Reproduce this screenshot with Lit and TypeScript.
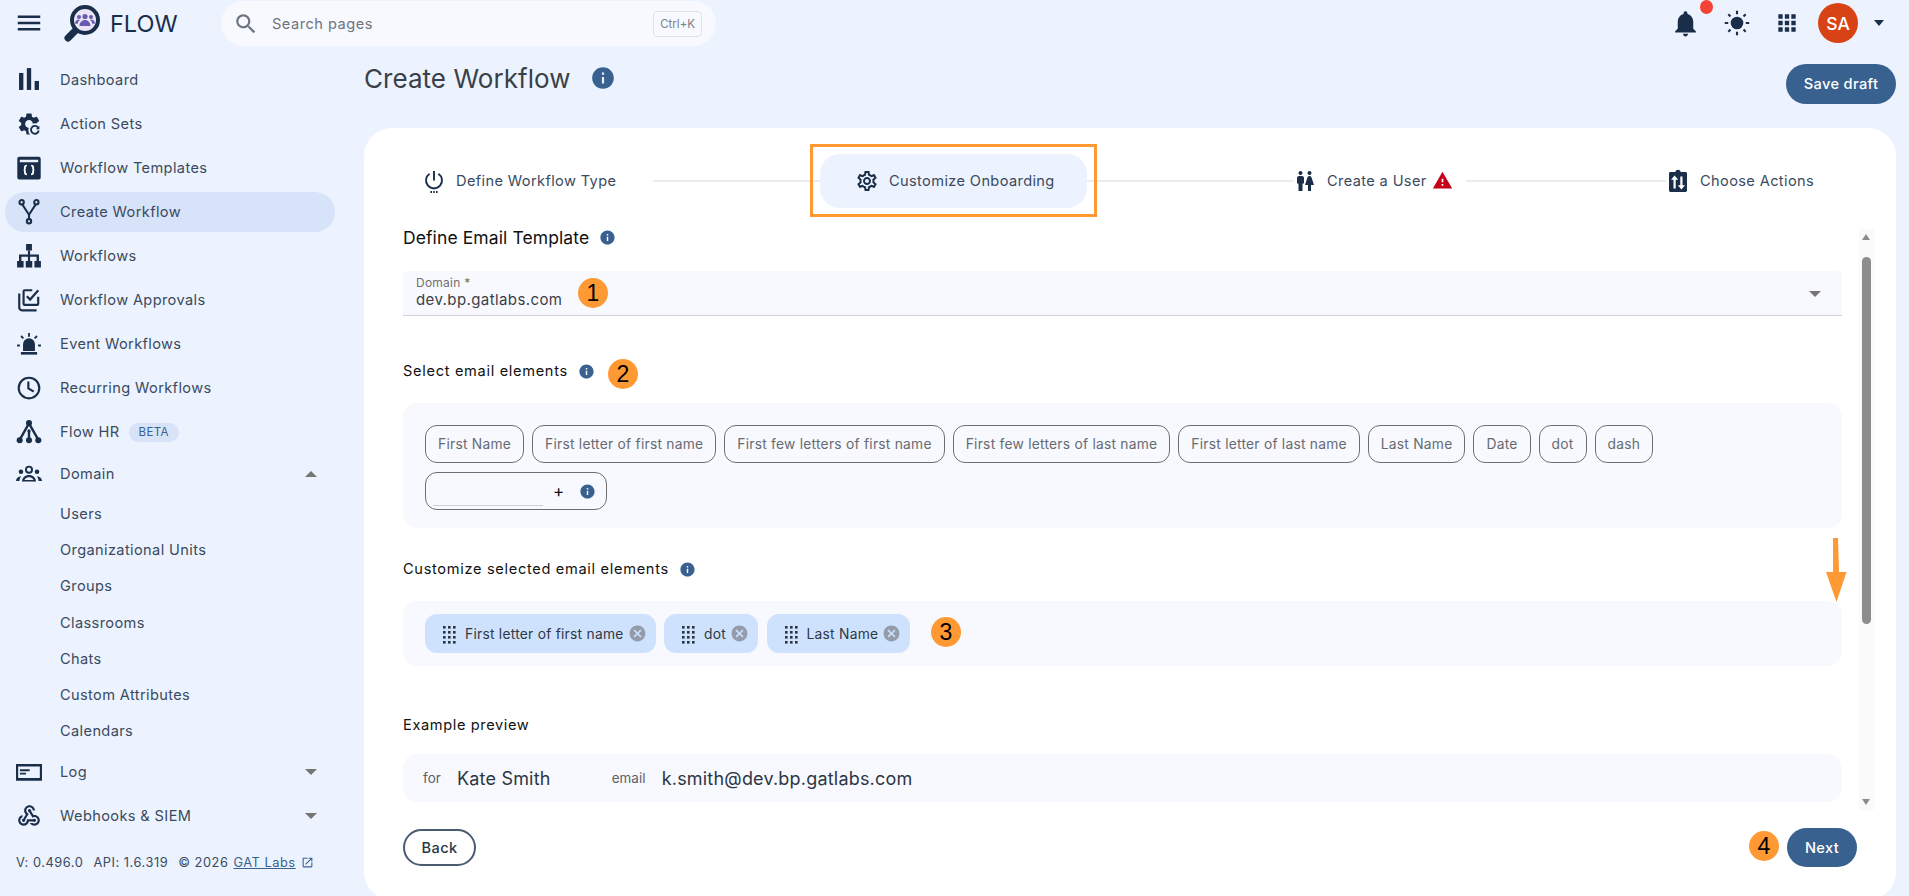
import { LitElement, html, css, svg } from 'lit'
import { customElement } from 'lit/decorators.js'

const P = {
  menu: 'M3 18h18v-2H3v2zm0-5h18v-2H3v2zm0-7v2h18V6H3z',
  search: 'M15.5 14h-.79l-.28-.27C15.41 12.59 16 11.11 16 9.5 16 5.91 13.09 3 9.5 3S3 5.91 3 9.5 5.91 16 9.5 16c1.61 0 3.09-.59 4.23-1.57l.27.28v.79l5 4.99L20.49 19l-4.99-5zm-6 0C7.01 14 5 11.99 5 9.5S7.01 5 9.5 5 14 7.01 14 9.5 11.99 14 9.5 14z',
  info: 'M12 2C6.48 2 2 6.48 2 12s4.48 10 10 10 10-4.48 10-10S17.52 2 12 2zm1 15h-2v-6h2v6zm0-8h-2V7h2v2z',
  bell: 'M12 22c1.1 0 2-.9 2-2h-4c0 1.1.9 2 2 2zm6-6v-5c0-3.07-1.63-5.64-4.5-6.32V4c0-.83-.67-1.5-1.5-1.5s-1.5.67-1.5 1.5v.68C7.64 5.36 6 7.92 6 11v5l-2 2v1h16v-1l-2-2z',
  apps: 'M4 8h4V4H4v4zm6 12h4v-4h-4v4zm-6 0h4v-4H4v4zm0-6h4v-4H4v4zm6 0h4v-4h-4v4zm6-10v4h4V4h-4zm-6 4h4V4h-4v4zm6 6h4v-4h-4v4zm0 6h4v-4h-4v4z',
  gear: 'M19.14 12.94c.04-.3.06-.61.06-.94 0-.32-.02-.64-.07-.94l2.03-1.58c.18-.14.23-.41.12-.61l-1.92-3.32c-.12-.22-.37-.29-.59-.22l-2.39.96c-.5-.38-1.03-.7-1.62-.94l-.36-2.54c-.04-.24-.24-.41-.48-.41h-3.84c-.24 0-.43.17-.47.41l-.36 2.54c-.59.24-1.13.57-1.62.94l-2.39-.96c-.22-.08-.47 0-.59.22L2.74 8.87c-.12.21-.08.47.12.61l2.03 1.58c-.05.3-.09.63-.09.94s.02.64.07.94l-2.03 1.58c-.18.14-.23.41-.12.61l1.92 3.32c.12.22.37.29.59.22l2.39-.96c.5.38 1.03.7 1.62.94l.36 2.54c.05.24.24.41.48.41h3.84c.24 0 .44-.17.47-.41l.36-2.54c.59-.24 1.13-.56 1.62-.94l2.39.96c.22.08.47 0 .59-.22l1.92-3.32c.12-.22.07-.47-.12-.61l-2.01-1.58zM12 15.6c-1.98 0-3.6-1.62-3.6-3.6s1.62-3.6 3.6-3.6 3.6 1.62 3.6 3.6-1.62 3.6-3.6 3.6z',
  gearOutline: 'M19.43 12.98c.04-.32.07-.64.07-.98 0-.34-.03-.66-.07-.98l2.11-1.65c.19-.15.24-.42.12-.64l-2-3.46c-.09-.16-.26-.25-.44-.25-.06 0-.12.01-.17.03l-2.49 1c-.52-.4-1.08-.73-1.69-.98l-.38-2.65C14.46 2.18 14.25 2 14 2h-4c-.25 0-.46.18-.49.42l-.38 2.65c-.61.25-1.17.59-1.69.98l-2.49-1c-.06-.02-.12-.03-.18-.03-.17 0-.34.09-.43.25l-2 3.46c-.13.22-.07.49.12.64l2.11 1.65c-.04.32-.07.65-.07.98 0 .33.03.66.07.98l-2.11 1.65c-.19.15-.24.42-.12.64l2 3.46c.09.16.26.25.44.25.06 0 .12-.01.17-.03l2.49-1c.52.4 1.08.73 1.69.98l.38 2.65c.03.24.24.42.49.42h4c.25 0 .46-.18.49-.42l.38-2.65c.61-.25 1.17-.59 1.69-.98l2.49 1c.06.02.12.03.18.03.17 0 .34-.09.43-.25l2-3.46c.12-.22.07-.49-.12-.64l-2.11-1.65zm-1.98-1.71c.04.31.05.52.05.73 0 .21-.02.43-.05.73l-.14 1.13.89.7 1.08.84-.7 1.21-1.27-.51-1.04-.42-.9.68c-.43.32-.84.56-1.25.73l-1.06.43-.16 1.13-.2 1.35h-1.4l-.19-1.35-.16-1.13-1.06-.43c-.43-.18-.83-.41-1.23-.71l-.91-.7-1.06.43-1.27.51-.7-1.21 1.08-.84.89-.7-.14-1.13c-.03-.31-.05-.54-.05-.74s.02-.43.05-.73l.14-1.13-.89-.7-1.08-.84.7-1.21 1.27.51 1.04.42.9-.68c.43-.32.84-.56 1.25-.73l1.06-.43.16-1.13.2-1.35h1.39l.19 1.35.16 1.13 1.06.43c.43.18.83.41 1.23.71l.91.7 1.06-.43 1.27-.51.7 1.21-1.07.85-.89.7.14 1.13zM12 8c-2.21 0-4 1.79-4 4s1.79 4 4 4 4-1.79 4-4-1.79-4-4-4zm0 6c-1.1 0-2-.9-2-2s.9-2 2-2 2 .9 2 2-.9 2-2 2z',
  wc: 'M5.5 22v-7.5H4V9c0-1.1.9-2 2-2h3c1.1 0 2 .9 2 2v5.5H9.5V22h-4zM18 22v-6h3l-2.54-7.63C18.18 7.55 17.42 7 16.56 7h-.12c-.86 0-1.63.55-1.9 1.37L12 16h3v6h3zM7.5 6c1.11 0 2-.89 2-2s-.89-2-2-2-2 .89-2 2 .89 2 2 2zm9 0c1.11 0 2-.89 2-2s-.89-2-2-2-2 .89-2 2 .89 2 2 2z',
  warn: 'M1 21h22L12 2 1 21zm12-3h-2v-2h2v2zm0-4h-2v-4h2v4z',
  cancel: 'M12 2C6.47 2 2 6.47 2 12s4.47 10 10 10 10-4.47 10-10S17.53 2 12 2zm5 13.59L15.59 17 12 13.41 8.41 17 7 15.59 10.59 12 7 8.41 8.41 7 12 10.59 15.59 7 17 8.41 13.41 12 17 15.59z',
  launch: 'M19 19H5V5h7V3H5c-1.11 0-2 .9-2 2v14c0 1.1.89 2 2 2h14c1.1 0 2-.9 2-2v-7h-2v7zM14 3v2h3.59l-9.83 9.83 1.41 1.41L19 6.41V10h2V3h-7z',
  webhook: 'M10 15h5.88c.27-.31.67-.5 1.12-.5.83 0 1.5.67 1.5 1.5s-.67 1.5-1.5 1.5c-.44 0-.84-.19-1.12-.5H11.9c-.46 2.28-2.48 4-4.9 4-2.76 0-5-2.24-5-5 0-2.42 1.72-4.44 4-4.9v2.07c-1.16.41-2 1.53-2 2.83 0 1.65 1.35 3 3 3s3-1.35 3-3v-1zm2.5-11c1.65 0 3 1.35 3 3h2c0-2.76-2.24-5-5-5s-5 2.24-5 5c0 1.43.6 2.71 1.55 3.62l-2.35 3.9c-.68.14-1.2.75-1.2 1.48 0 .83.67 1.5 1.5 1.5s1.5-.67 1.5-1.5c0-.16-.02-.31-.07-.45l3.38-5.63C10.49 9.61 9.5 8.42 9.5 7c0-1.65 1.35-3 3-3zm4.5 9c-.64 0-1.23.2-1.72.54l-3.05-5.07C11.53 8.35 11 7.74 11 7c0-.83.67-1.5 1.5-1.5S14 6.17 14 7c0 .15-.02.29-.06.43l2.19 3.65c.28-.05.57-.08.87-.08 2.76 0 5 2.24 5 5s-2.24 5-5 5c-1.85 0-3.47-1.01-4.33-2.5h2.67c.48.32 1.05.5 1.66.5 1.65 0 3-1.35 3-3s-1.35-3-3-3z',
}

const ico = (d: string, cls = 'i24') => html`<svg class=${cls} viewBox="0 0 24 24"><path d=${d}></path></svg>`

const navIcons: Record<string, unknown> = {
  chart: svg`<rect x="2.800" y="5.500" width="4" height="15.700"/><rect x="10" y="1" width="4" height="20.200"/><rect x="17.200" y="12.900" width="4" height="8.300"/>`,
  action: svg`<path d=${P.gear}/><circle cx="17.500" cy="17.500" r="6.200" fill="#ecf3fe"/><path d="M20.600 15.600a3.600 3.600 0 1 0 .4 2.400" fill="none" stroke="#1a2e4a" stroke-width="1.700"/><path d="M21.600 13.600v3.200h-3.200z"/>`,
  template: svg`<path fill-rule="evenodd" d="M3 1.500h18a1.800 1.800 0 0 1 1.800 1.800v17.400a1.800 1.800 0 0 1-1.800 1.800H3a1.800 1.800 0 0 1-1.800-1.800V3.300A1.800 1.800 0 0 1 3 1.500zM3.500 6.800h17V4.300h-17z"/><path d="M10 9.800c-1.500 0-1.800.6-1.800 1.600v1.400c0 .6-.3 1-1.100 1 .8 0 1.100.4 1.100 1v1.400c0 1 .3 1.600 1.800 1.600M14 9.800c1.500 0 1.800.6 1.800 1.600v1.400c0 .6.3 1 1.100 1-.8 0-1.100.4-1.100 1v1.400c0 1-.3 1.600-1.800 1.600" fill="none" stroke="#fff" stroke-width="1.700"/>`,
  fork: svg`<g fill="none" stroke="#1a2e4a" stroke-width="1.900"><circle cx="5.200" cy="3" r="2"/><circle cx="18.800" cy="3" r="2"/><circle cx="12" cy="20.600" r="2"/><path d="M5.800 5 12 14.500 18.200 5M12 14.500v4"/></g>`,
  tree: svg`<path d="M9.300 1h5.400v6H9.300zM1 16.500h6v6H1zM9 16.500h6v6H9zM17 16.500h6v6h-6z"/><path d="M11 7h2v3.600h8.200v6h-2.200v-3.800H13v3.800h-2v-3.800H5v3.800H2.800v-6H11z"/>`,
  approve: svg`<g fill="none" stroke="#1a2e4a" stroke-width="2"><path d="M3 6v13a2.500 2.500 0 0 0 2.500 2.500H19"/><path d="M20.500 9v6.500a1 1 0 0 1-1 1H8a1 1 0 0 1-1-1V4a1 1 0 0 1 1-1h7"/><path d="M10 8.600 13 11.600 20.600 3"/></g>`,
  siren: svg`<path d="M6.500 18.500v-6.200a5.500 5.500 0 0 1 11 0v6.200z"/><rect x="4.500" y="19.400" width="15" height="2.400"/><g stroke="#1a2e4a" stroke-width="1.700" fill="none"><path d="M12 1.800v3.400M4.600 4.600l2.200 2.200M19.400 4.600l-2.200 2.200M1 13.400h2.600M20.400 13.400H23"/></g>`,
  clock: svg`<g fill="none" stroke="#1a2e4a" stroke-width="2"><circle cx="12" cy="12" r="9.500"/><path d="M11.400 6v6.400l5 3"/></g>`,
  hr: svg`<g fill="none" stroke="#1a2e4a" stroke-width="2.200"><path d="M12 4 3.500 19M12 4 20.500 19M12 11v8"/></g><circle cx="12" cy="3.800" r="2.800"/><circle cx="12" cy="11" r="1.500"/><circle cx="3.400" cy="19.600" r="2.800"/><circle cx="12" cy="19.600" r="2.800"/><circle cx="20.600" cy="19.600" r="2.800"/>`,
  groups: svg`<circle cx="12" cy="8" r="2.800" fill="none" stroke="#1a2e4a" stroke-width="1.800"/><circle cx="4.600" cy="10" r="2.100"/><circle cx="19.400" cy="10" r="2.100"/><path d="M5.600 19c0-3.600 3-6 6.400-6s6.400 2.400 6.400 6h-2c0-2.300-2-4-4.400-4s-4.400 1.700-4.400 4z"/><path d="M7 17.500h10V19H7zM0 18.500c0-2.600 1.800-4.400 4.800-4.500-.9 1.100-1.500 2.600-1.700 4.500zM24 18.500c0-2.600-1.800-4.400-4.800-4.500.9 1.100 1.500 2.600 1.700 4.500z"/>`,
  log: svg`<path fill-rule="evenodd" d="M0 4.500h24v15.500H0zM2 7v10.500h20V7z"/><path d="M3.600 9.400h9v1.800h-9zM3.600 12.600h5.600v1.800H3.600z"/>`,
  webhook: svg`<path d=${P.webhook}/>`,
}

interface NavItem { label: string; icon: string; active?: boolean; beta?: boolean; caret?: 'up' | 'down'; kind?: string }
const nav: NavItem[] = [
  { label: 'Dashboard', icon: 'chart' },
  { label: 'Action Sets', icon: 'action' },
  { label: 'Workflow Templates', icon: 'template' },
  { label: 'Create Workflow', icon: 'fork', active: true },
  { label: 'Workflows', icon: 'tree' },
  { label: 'Workflow Approvals', icon: 'approve' },
  { label: 'Event Workflows', icon: 'siren' },
  { label: 'Recurring Workflows', icon: 'clock' },
  { label: 'Flow HR', icon: 'hr', beta: true },
  { label: 'Domain', icon: 'groups', caret: 'up', kind: 'domain' },
]
const domainSub = ['Users', 'Organizational Units', 'Groups', 'Classrooms', 'Chats', 'Custom Attributes', 'Calendars']
const navEnd: NavItem[] = [
  { label: 'Log', icon: 'log', caret: 'down' },
  { label: 'Webhooks & SIEM', icon: 'webhook', caret: 'down' },
]
const elements = ['First Name', 'First letter of first name', 'First few letters of first name', 'First few letters of last name', 'First letter of last name', 'Last Name', 'Date', 'dot', 'dash']
const selected = ['First letter of first name', 'dot', 'Last Name']
// numbered callouts that were drawn over the screenshot
const badges = [
  { n: 1, x: 593, y: 293 },
  { n: 2, x: 623, y: 374 },
  { n: 3, x: 946, y: 632 },
  { n: 4, x: 1764, y: 846 },
]

@customElement('app-root')
export class AppRoot extends LitElement {
  static styles = css`
    :host {
      display: block;
      position: relative;
      width: 1909px;
      height: 896px;
      overflow: hidden;
      background: #ecf3fe;
      font-family: Inter, 'Liberation Sans', sans-serif;
      font-size: 14.6px;
      letter-spacing: 0.37px;
      color: #3a4a5f;
    }
    svg { display: block; flex: none; fill: #1a2e4a; }
    .i24 { width: 24px; height: 24px; }
    .info { fill: #38618f; }

    .topbar { height: 46px; display: flex; align-items: center; }
    .burger { margin-left: 14px; width: 30px; height: 30px; }
    .logo { display: flex; align-items: center; margin-left: 14px; }
    .logo svg { width: 44px; height: 46px; }
    .logo span { font-size: 23.5px; letter-spacing: 0; color: #1a2e4a; margin-left: 8px; width: 66px; }
    .search {
      margin-left: 45px;
      width: 495px;
      height: 45px;
      margin-top: 1px;
      border-radius: 23px;
      background: #f7f9ff;
      display: flex;
      align-items: center;
      padding: 0 14px 0 12px;
      box-sizing: border-box;
      color: #6d7580;
      letter-spacing: 0.5px;
    }
    .search svg { width: 26px; height: 26px; fill: #6d7580; }
    .search .ph { margin-left: 13px; flex: 1; }
    .kbd {
      border: 1px solid #dfe2e8;
      border-radius: 4px;
      font-size: 11.5px;
      padding: 0 6px;
      line-height: 24px;
      letter-spacing: 0;
      color: #7a8089;
    }
    .top-actions { margin-left: auto; display: flex; align-items: center; position: relative; }
    .top-actions svg.bell { width: 31px; height: 31px; }
    .top-actions svg.sun { width: 28px; height: 28px; margin-left: 22px; }
    .top-actions svg.apps { width: 26px; height: 26px; margin-left: 23px; }
    .dot { position: absolute; left: 30px; top: -3px; width: 13px; height: 14px; border-radius: 50%; background: #f44336; }
    .avatar {
      margin-left: 18px;
      width: 40px;
      height: 40px;
      border-radius: 50%;
      background: #d84315;
      color: #fff;
      font-size: 17.5px;
      font-weight: 500;
      letter-spacing: 0;
      display: flex;
      align-items: center;
      justify-content: center;
    }
    .user-caret { margin: 0 25px 0 16px; width: 0; height: 0; border: 5.5px solid transparent; border-top: 6px solid #1a2e4a; border-bottom: 0; }

    .body { display: flex; height: 850px; }
    .side { width: 364px; flex: none; padding-top: 12px; box-sizing: border-box; }
    .row { height: 44px; display: flex; align-items: center; padding-left: 16px; position: relative; }
    .row svg { width: 26px; height: 26px; }
    .row .label { margin-left: 18px; }
    .row.domain { height: 42px; padding-bottom: 2px; box-sizing: border-box; }
    .row.active::before {
      content: '';
      position: absolute;
      left: 5px;
      width: 330px;
      top: 2px;
      height: 40px;
      border-radius: 20px;
      background: #d7e3f8;
    }
    .row > * { position: relative; }
    .beta {
      margin-left: 9px;
      height: 19px;
      line-height: 19px;
      padding: 0 10px;
      border-radius: 10px;
      background: #d8e3f8;
      color: #38618f;
      font-size: 11.5px;
    }
    .sub { height: 36.2px; line-height: 36px; padding-left: 60px; }
    .subs { margin-bottom: 1px; }
    .caret { position: absolute; left: 305px; width: 0; height: 0; border: 6px solid transparent; }
    .caret.down { border-top: 6px solid #757575; border-bottom: 0; }
    .caret.up { border-bottom: 6px solid #757575; border-top: 0; }
    .foot {
      padding: 17px 0 0 16px;
      font-size: 12.8px;
      letter-spacing: 0.55px;
      display: flex;
      align-items: center;
      white-space: nowrap;
    }
    .foot span + span { margin-left: 10px; }
    .foot a { color: #38618f; text-decoration: underline; margin-left: 5px; }
    .foot svg { width: 13px; height: 13px; fill: #38618f; margin-left: 5px; }

    .main { flex: 1; padding-right: 13px; min-width: 0; }
    .head { height: 82px; display: flex; }
    h1 { margin: 17px 0 0; font-size: 26px; line-height: 32px; font-weight: 400; color: #3a4048; letter-spacing: 0.05px; }
    .head .info { width: 26px; height: 26px; margin: 19px 0 0 19px; }
    .save {
      margin: 18px 0 0 auto;
      width: 110px;
      height: 40px;
      border-radius: 20px;
      background: #38618f;
      color: #fff;
      font-weight: 500;
      display: flex;
      align-items: center;
      justify-content: center;
    }
    .card { height: 772px; background: #fff; border-radius: 28px; display: flex; flex-direction: column; padding-left: 39px; box-sizing: border-box; }

    .stepper {
      height: 101px;
      padding-top: 4px;
      box-sizing: border-box;
      margin-left: 19px;
      display: grid;
      grid-template-columns: 231px 167px 267px 206px 173px 200px auto;
      align-items: center;
      flex: none;
      letter-spacing: 0.37px;
    }
    .step { display: flex; align-items: center; height: 54px; }
    .step .t { margin-left: 10px; }
    .step.cur { border-radius: 20px; background: #ecf3fe; padding-left: 35px; }
    .step .warn { width: 21px; height: 21px; fill: #c40018; margin-left: 5px; }
    .ln { height: 2px; background: #ececee; }

    .scroll { display: flex; height: 581px; flex: none; gap: 17px; padding-right: 22px; }
    .content { flex: 1; min-width: 0; }
    .bar { width: 15px; flex: none; background: #fafafa; position: relative; }
    .thumb { position: absolute; left: 3px; top: 28px; width: 9px; height: 367px; border-radius: 5px; background: #8c8c8c; }
    .arr { position: absolute; left: 3px; width: 0; height: 0; border: 4.5px solid transparent; }
    .arr.up { top: 5px; border-bottom: 6px solid #8c8c8c; border-top: 0; }
    .arr.dn { bottom: 5px; border-top: 6px solid #8c8c8c; border-bottom: 0; }

    h2 { margin: 0; font-size: 17.5px; line-height: 16px; font-weight: 400; color: #111; display: flex; align-items: center; letter-spacing: 0.1px; }
    h3 { margin: 0; font-size: 14.6px; line-height: 20px; font-weight: 400; color: #111; display: flex; align-items: center; letter-spacing: 0.68px; }
    h2 .info, h3 .info { width: 17px; height: 17px; margin-left: 10px; }
    .field {
      margin-top: 25px;
      height: 45px;
      background: #f8f9fe;
      border-bottom: 1px solid #cfcfd4;
      border-radius: 4px 4px 0 0;
      box-sizing: border-box;
      padding: 5px 13px 0;
      position: relative;
    }
    .field small { display: block; font-size: 12px; line-height: 14px; color: #707070; letter-spacing: 0.25px; }
    .field div { font-size: 15px; letter-spacing: 0.4px; line-height: 19px; color: #3a3f47; }
    .field .fc { position: absolute; right: 21px; top: 20px; width: 0; height: 0; border: 6px solid transparent; border-top: 6px solid #757575; border-bottom: 0; margin: 0; }
    .title2 { margin-top: 45px; }
    .panel { background: #f8f9fe; border-radius: 14px; }
    .pick { margin-top: 22px; padding: 22px 22px 18px 22px; height: 125px; box-sizing: border-box; display: flex; flex-wrap: wrap; gap: 9px 8px; align-content: flex-start; }
    .chip {
      height: 38px;
      box-sizing: border-box;
      border: 1px solid #6e6e6e;
      border-radius: 12px;
      padding: 0 12px;
      display: flex;
      align-items: center;
      font-size: 13.8px;
      letter-spacing: 0.24px;
      color: #666b72;
      white-space: nowrap;
    }
    .chip.add { width: 182px; position: relative; padding: 0; }
    .chip.add i { position: absolute; left: 7px; top: 32px; width: 110px; height: 1px; background: #cfcfd4; }
    .chip.add b { position: absolute; left: 127px; top: 6px; font-weight: 400; font-size: 17px; line-height: 24px; color: #111; }
    .chip.add .info { position: absolute; left: 153px; top: 10px; width: 17px; height: 17px; }
    .title3 { margin-top: 31px; }
    .sel { margin-top: 22px; height: 65px; padding: 13px 22px; box-sizing: border-box; display: flex; gap: 8.5px; }
    .tag {
      height: 39px;
      border-radius: 12px;
      background: #cfe2fd;
      display: flex;
      align-items: center;
      padding: 0 9px 0 16px;
      font-size: 13.8px;
      letter-spacing: 0.25px;
      color: #2f3845;
      white-space: nowrap;
    }
    .tag .grip { width: 16px; height: 20px; margin-right: 8px; fill: #2b3440; }
    .tag .x { width: 19px; height: 19px; fill: #949cab; margin-left: 4px; }
    .title4 { margin-top: 49px; color: #111; line-height: 20px; letter-spacing: 0.62px; }
    .preview { margin-top: 19px; height: 48px; display: flex; align-items: center; padding-left: 20px; font-size: 13.4px; letter-spacing: 0.1px; color: #5c6067; }
    .preview strong { font-weight: 400; font-size: 18px; color: #2c3644; letter-spacing: 0.2px; margin-left: 16px; }
    .preview .e { margin-left: 61px; }

    .actions { display: flex; justify-content: space-between; align-items: center; padding: 18px 39px 0 0; }
    .back {
      width: 73px;
      height: 37px;
      border: 2px solid #4b5b70;
      border-radius: 19px;
      box-sizing: border-box;
      display: flex;
      align-items: center;
      justify-content: center;
      color: #2c3644;
      font-weight: 500;
    }
    .next {
      width: 70px;
      height: 39px;
      border-radius: 20px;
      background: #38618f;
      color: #fff;
      font-weight: 500;
      display: flex;
      align-items: center;
      justify-content: center;
    }

    .badge {
      position: absolute;
      width: 30px;
      height: 30px;
      margin: -15px 0 0 -15px;
      border-radius: 50%;
      background: #ff9933;
      color: #000;
      font-family: 'Liberation Sans', sans-serif;
      font-size: 23px;
      letter-spacing: 0;
      display: flex;
      align-items: center;
      justify-content: center;
    }
    .mark { position: absolute; left: 810px; top: 144px; width: 287px; height: 73px; border: 3px solid #ff9933; box-sizing: border-box; }
    .arrow { position: absolute; left: 1825px; top: 538px; width: 22px; height: 64px; fill: #ff9933; }
  `

  renderSide () {
    const row = (n: NavItem) => html`
      <div class="row ${n.active ? 'active' : ''} ${n.kind ?? ''}">
        <svg viewBox="0 0 24 24">${navIcons[n.icon]}</svg>
        <span class="label">${n.label}</span>
        ${n.beta ? html`<span class="beta">BETA</span>` : ''}
        ${n.caret ? html`<span class="caret ${n.caret}"></span>` : ''}
      </div>`
    return html`
      <nav class="side">
        ${nav.map(row)}
        <div class="subs">${domainSub.map((s) => html`<div class="sub">${s}</div>`)}</div>
        ${navEnd.map(row)}
        <div class="foot"><span>V: 0.496.0</span><span>API: 1.6.319</span><span>© 2026</span><a>GAT Labs</a>${ico(P.launch, '')}</div>
      </nav>`
  }

  renderStepper () {
    return html`
      <div class="stepper">
        <div class="step">
          <svg class="i24" viewBox="0 0 24 24">
            <path d="M12 2v9.500" fill="none" stroke="#1a2e4a" stroke-width="1.900"/>
            <path d="M7.600 4.800a8 8 0 1 0 8.800 0" fill="none" stroke="#1a2e4a" stroke-width="1.900"/>
            <path d="M8.400 22h1.600v2H8.400zM11.200 22h1.600v2h-1.600zM14 22h1.600v2H14z"/>
          </svg>
          <span class="t">Define Workflow Type</span>
        </div>
        <div class="ln"></div>
        <div class="step cur">${ico(P.gearOutline)}<span class="t">Customize Onboarding</span></div>
        <div class="ln"></div>
        <div class="step">${ico(P.wc)}<span class="t">Create a User</span>${ico(P.warn, 'warn')}</div>
        <div class="ln"></div>
        <div class="step">
          <svg class="i24" viewBox="0 0 24 24">
            <path d="M4.400 3h4.800a2.900 2.900 0 0 1 5.600 0h4.800a1.400 1.400 0 0 1 1.400 1.400v17.200a1.400 1.400 0 0 1-1.400 1.400H4.400A1.400 1.400 0 0 1 3 21.600V4.400A1.400 1.400 0 0 1 4.400 3z"/>
            <path d="M8.600 6.500 5 10.800h2.500v8.700h2.200v-8.700h2.500zM15.400 20.500 19 16.200h-2.500V7.500h-2.200v8.700h-2.500z" fill="#fff"/>
          </svg>
          <span class="t">Choose Actions</span>
        </div>
      </div>`
  }

  renderGrip () {
    const dots = []
    for (let x = 0; x < 3; x++) {
      for (let y = 0; y < 4; y++) {
        dots.push(svg`<rect x=${2 + x * 5} y=${2 + y * 5} width="2.600" height="2.600"/>`)
      }
    }
    return html`<svg class="grip" viewBox="0 0 16 20">${dots}</svg>`
  }

  render () {
    return html`
      <header class="topbar">
        <svg class="burger" viewBox="0 0 24 24"><path d=${P.menu}></path></svg>
        <div class="logo">
          <svg viewBox="0 0 44 46">
            <path d="M18 30 10 38" stroke="#1a2e4a" stroke-width="7" stroke-linecap="round" fill="none"/>
            <circle cx="27" cy="20" r="13" fill="#e9e6f7" stroke="#1a2e4a" stroke-width="4"/>
            <g fill="#6a5cb0">
              <circle cx="27" cy="16.500" r="2.600"/><circle cx="21" cy="17" r="2"/><circle cx="33" cy="17" r="2"/>
              <path d="M21.500 26c0-3.500 2.500-6 5.500-6s5.500 2.500 5.500 6zM17 23.500c0-2.500 2-4 4-4l1 .5c-1.500 1-2.200 2.500-2.500 4zM37 23.500c0-2.500-2-4-4-4l-1 .5c1.500 1 2.200 2.500 2.500 4z"/>
            </g>
          </svg>
          <span>FLOW</span>
        </div>
        <div class="search">
          ${ico(P.search, '')}
          <span class="ph">Search pages</span>
          <span class="kbd">Ctrl+K</span>
        </div>
        <div class="top-actions">
          ${ico(P.bell, 'bell')}
          <span class="dot"></span>
          <svg class="sun" viewBox="0 0 24 24">
            <circle cx="12" cy="12" r="5.400"/>
            <path d="M12 1.500v3M12 19.500v3M1.500 12h3M19.500 12h3M4.600 4.600l1.800 1.800M17.600 17.600l1.800 1.800M4.600 19.400l1.800-1.800M17.600 6.400l1.800-1.800" stroke="#1a2e4a" stroke-width="1.800" fill="none"/>
          </svg>
          ${ico(P.apps, 'apps')}
          <div class="avatar">SA</div>
          <span class="user-caret"></span>
        </div>
      </header>
      <div class="body">
        ${this.renderSide()}
        <main class="main">
          <div class="head">
            <h1>Create Workflow</h1>
            ${ico(P.info, 'info')}
            <div class="save">Save draft</div>
          </div>
          <section class="card">
            ${this.renderStepper()}
            <div class="scroll">
              <div class="content">
                <h2>Define Email Template ${ico(P.info, 'info')}</h2>
                <div class="field">
                  <small>Domain *</small>
                  <div>dev.bp.gatlabs.com</div>
                  <span class="fc"></span>
                </div>
                <h3 class="title2">Select email elements ${ico(P.info, 'info')}</h3>
                <div class="panel pick">
                  ${elements.map((e) => html`<span class="chip">${e}</span>`)}
                  <span class="chip add"><i></i><b>+</b>${ico(P.info, 'info')}</span>
                </div>
                <h3 class="title3">Customize selected email elements ${ico(P.info, 'info')}</h3>
                <div class="panel sel">
                  ${selected.map((s) => html`<span class="tag">${this.renderGrip()}${s}${ico(P.cancel, 'x')}</span>`)}
                </div>
                <div class="title4">Example preview</div>
                <div class="panel preview">
                  <span>for</span><strong>Kate Smith</strong>
                  <span class="e">email</span><strong>k.smith@dev.bp.gatlabs.com</strong>
                </div>
              </div>
              <div class="bar"><span class="arr up"></span><span class="thumb"></span><span class="arr dn"></span></div>
            </div>
            <div class="actions">
              <div class="back">Back</div>
              <div class="next">Next</div>
            </div>
          </section>
        </main>
      </div>
      <div class="mark"></div>
      <svg class="arrow" viewBox="0 0 22 64"><path d="M8 0h5l1 34h7.500L11.500 64 1 34h7z"></path></svg>
      ${badges.map((b) => html`<span class="badge" style="left:${b.x}px;top:${b.y}px">${b.n}</span>`)}
    `
  }
}
